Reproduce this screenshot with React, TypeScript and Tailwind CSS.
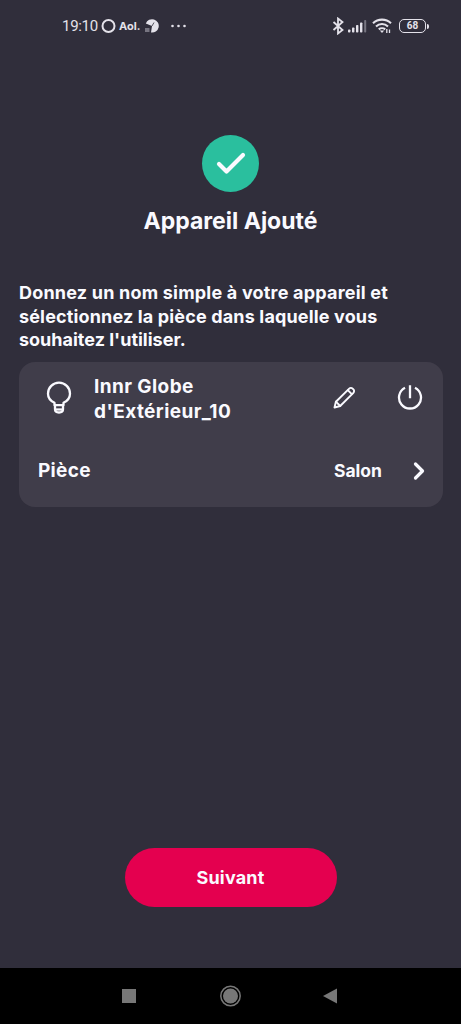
import { Check, ChevronRight } from 'lucide-react'

function StatusBar() {
  return (
    <header className="flex h-[52px] shrink-0 items-center justify-between pr-[32px] pl-[62px] font-['Roboto',sans-serif] text-[#e4e2ea]">
      <div className="flex items-center">
        <span className="w-[39px] text-[15px] font-normal tracking-[-0.3px]">19:10</span>
        <svg className="h-4 w-4" viewBox="0 0 16 16" fill="none" stroke="currentColor">
          <circle cx="7.5" cy="8" r="6" strokeWidth="2" />
        </svg>
        <span className="ml-[2px] w-[24px] font-['Inter',sans-serif] text-[11px] font-bold">Aol.</span>
        <svg className="ml-px h-4 w-4" viewBox="0 0 16 16" fill="currentColor">
          <path d="M1.800 5.500A6.700 6.700 0 1 1 7 14.500L8 8z" />
          <path d="M1 10h4.500v4H1z" opacity=".4" />
          <path d="M8 8 10 4.500" fill="none" stroke="#302e3b" strokeWidth=".8" />
        </svg>
        <svg className="ml-[10px] h-4 w-[18px]" viewBox="0 0 18 16" fill="currentColor">
          <circle cx="2.5" cy="8" r="1.3" />
          <circle cx="8.5" cy="8" r="1.3" />
          <circle cx="14.5" cy="8" r="1.3" />
        </svg>
      </div>

      <div className="flex items-center">
        <svg className="h-[18px] w-[13px]" viewBox="0 0 13 18" fill="none" stroke="currentColor" strokeWidth="1.8">
          <path d="m1.500 5 9 8L6 16.500v-15L10.500 5l-9 8" />
        </svg>
        <svg className="ml-[3px] h-4 w-[21px]" viewBox="0 0 21 16" fill="currentColor">
          <rect x="0" y="11.5" width="2.4" height="3" rx=".8" />
          <rect x="4" y="9.5" width="2.4" height="5" rx=".8" />
          <rect x="8" y="7" width="2.4" height="7.5" rx=".8" />
          <rect x="12" y="4.5" width="2.4" height="10" rx=".8" />
          <rect x="16.2" y="2" width="2" height="12.5" rx=".8" opacity=".4" />
        </svg>
        <svg className="ml-[3px] h-[18px] w-[21px]" viewBox="0 0 21 18" fill="none" stroke="currentColor" strokeWidth="2.1">
          <path d="M1 6.200a13 13 0 0 1 18 0M4 9.400a8.800 8.800 0 0 1 12 0M6.800 12.400a4.800 4.800 0 0 1 6.400 0" />
          <path d="m7.800 13.500 2.200 2.500 2.200-2.500z" fill="currentColor" stroke="none" />
          <path d="M14.800 12v4M17.500 12.500v3.500" strokeWidth="1.3" />
        </svg>
        <div className="ml-[6px] flex h-[14px] w-[27px] items-center justify-center rounded-[5px] border-[1.5px] border-[#e4e2ea]">
          <span className="text-[10px] leading-none font-bold">68</span>
        </div>
        <div className="ml-px h-[5px] w-[2px] rounded-r bg-[#e4e2ea]" />
      </div>
    </header>
  )
}

function BulbIcon() {
  return (
    <svg className="h-[34px] w-[26px]" viewBox="0 0 26 34" fill="none" stroke="currentColor" strokeWidth="2.3" strokeLinejoin="round">
      <path d="M8.500 24.200v-2.400C4.400 19.800 2 16.600 2 12.700a11 11 0 0 1 22 0c0 3.900-2.400 7.100-6.500 9.100v2.400z" />
      <path d="M9 24.500v3.800c0 2.300 1.500 3.200 4 3.200s4-.9 4-3.200v-3.800" />
      <path d="M9 28.500h8" />
    </svg>
  )
}

function PencilIcon() {
  return (
    <svg className="h-6 w-6" viewBox="0 0 24 24" fill="none" stroke="currentColor" strokeWidth="1.9" strokeLinejoin="round" strokeLinecap="round">
      <path d="m2.500 21.500 1.400-5.800L17.200 2.600a2.400 2.400 0 0 1 3.400 0l.8.8a2.400 2.400 0 0 1 0 3.400L8.200 20z" />
      <path d="m15.800 4.200 4 4M3.900 15.700 8.200 20" />
    </svg>
  )
}

function PowerIcon() {
  return (
    <svg className="h-[26px] w-[26px]" viewBox="0 0 26 26" fill="none" stroke="currentColor" strokeWidth="2.3">
      <path d="M8 2.700a11 11 0 1 0 10 0M13 .2v13" />
    </svg>
  )
}

function DeviceCard() {
  return (
    <section className="mr-[18px] ml-[19px] mt-[10px] flex h-[145px] flex-col rounded-[16px] bg-[#403d4a]">
      <div className="flex h-[72px] items-center pr-[20px] pl-[27px]">
        <BulbIcon />
        <p className="ml-[22px] flex-1 pt-[2px] text-[19px] leading-[25px] tracking-[0.42px]">
          Innr Globe
          <br />
          d'Extérieur_10
        </p>
        <button aria-label="Modifier">
          <PencilIcon />
        </button>
        <button aria-label="Allumer" className="ml-[41px]">
          <PowerIcon />
        </button>
      </div>
      <div className="flex h-[73px] items-center pt-[2px] pr-[10px] pl-[19px]">
        <span className="flex-1 pt-px text-[19px] tracking-[0.3px]">Pièce</span>
        <span className="text-[17.5px]">Salon</span>
        <ChevronRight className="ml-[23px] h-[28px] w-[28px]" strokeWidth={2.8} />
      </div>
    </section>
  )
}

function NavBar() {
  return (
    <nav className="flex h-[56px] shrink-0 items-center justify-between bg-black pr-[123px] pl-[122px] text-[#777777]">
      <div className="h-[14px] w-[14px] bg-[#777777]" />
      <svg className="h-[22px] w-[22px]" viewBox="0 0 22 22">
        <circle cx="11.5" cy="11" r="9.7" fill="none" stroke="currentColor" strokeWidth="1.5" />
        <circle cx="11.5" cy="11" r="7.5" fill="currentColor" />
      </svg>
      <svg className="h-[16px] w-[15px]" viewBox="0 0 15 16" fill="currentColor">
        <path d="M0 8 14 .5v15z" />
      </svg>
    </nav>
  )
}

export default function App() {
  return (
    <div className="flex h-screen w-full flex-col bg-[#302e3b] font-['Inter',sans-serif] font-bold text-[#fafaff]">
      <StatusBar />
      <main className="flex flex-1 flex-col">
        <div className="mt-[83px] flex h-[57px] w-[57px] items-center justify-center self-center rounded-full bg-[#2abf9e]">
          <Check className="h-[36px] w-[36px]" strokeWidth={2.8} />
        </div>
        <h1 className="mt-[14px] text-center text-[23px] leading-[30px]">Appareil Ajouté</h1>
        <p className="mt-[45px] ml-[19px] text-[18px] leading-[23.5px] whitespace-nowrap">
          <span className="tracking-[0.2px]">Donnez un nom simple à votre appareil et</span>
          <br />
          <span className="tracking-[0.15px]">sélectionnez la pièce dans laquelle vous</span>
          <br />
          souhaitez l'utiliser.
        </p>
        <DeviceCard />
        <button className="mt-auto mb-[61px] h-[59px] w-[212px] self-center rounded-full bg-[#e4004f] text-[18px] tracking-[0.2px]">
          Suivant
        </button>
      </main>
      <NavBar />
    </div>
  )
}
